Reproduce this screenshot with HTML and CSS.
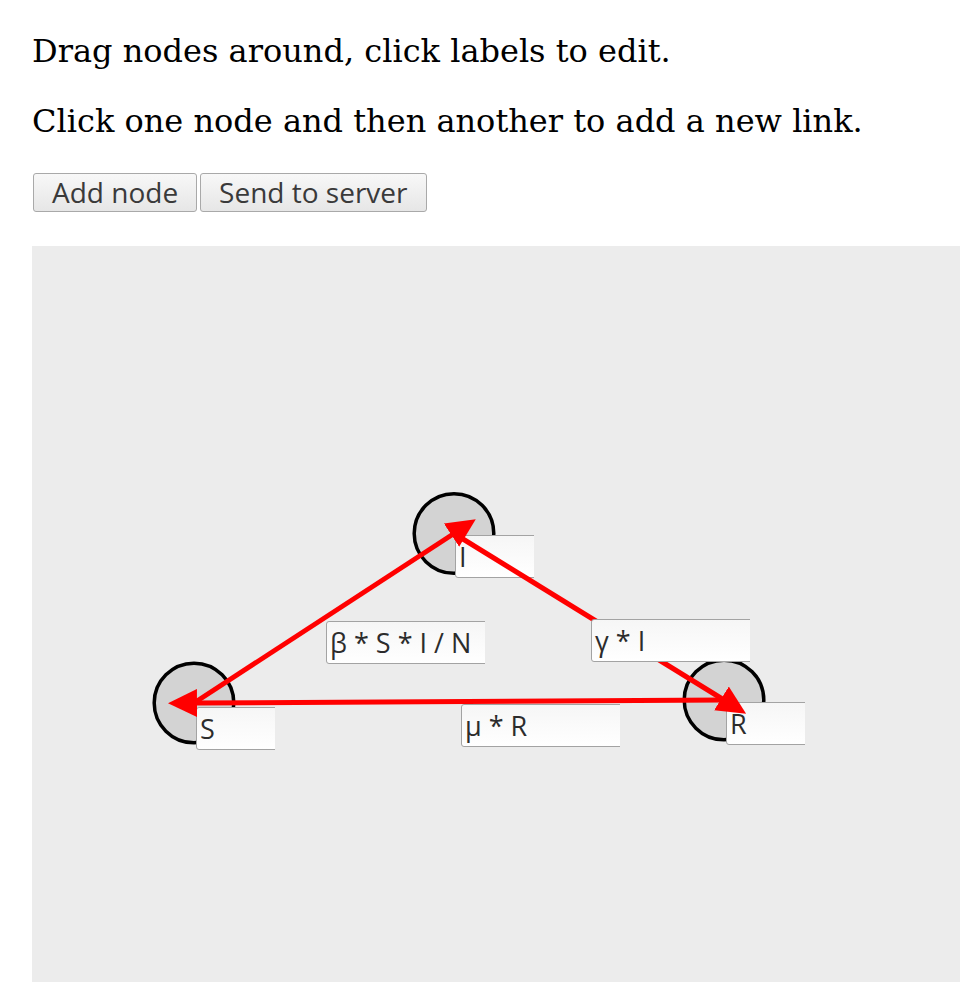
FILE: index.html
```html
<!DOCTYPE html>
<html>
<head>
<meta charset="utf-8">
<title>Graph editor</title>
<link rel="stylesheet" href="styles.css">
</head>
<body>
<p class="intro">Drag nodes around, click labels to edit.</p>
<p class="intro">Click one node and then another to add a new link.</p>
<div class="toolbar">
  <button class="btn" type="button">Add node</button>
  <button class="btn" type="button">Send to server</button>
</div>
<div class="canvas">
  <svg class="graph" width="928" height="736" viewBox="0 0 928 736">
    <defs>
      <marker id="arrow" markerUnits="userSpaceOnUse" viewBox="0 0 29 28" markerWidth="29" markerHeight="28" refX="3" refY="14" orient="auto">
        <path d="M0,0 L29,14 L0,28 Z" fill="#ff0000"/>
      </marker>
    </defs>

    <g class="node">
      <circle cx="162" cy="457" r="39.8"/>
      <foreignObject x="164" y="461" width="79" height="43">
        <div class="lbl"><span class="box" contenteditable="true">S</span></div>
      </foreignObject>
    </g>
    <g class="node">
      <circle cx="422" cy="287.5" r="39.8"/>
      <foreignObject x="423" y="289" width="79" height="43">
        <div class="lbl"><span class="box" contenteditable="true">I</span></div>
      </foreignObject>
    </g>
    <g class="node">
      <circle cx="692" cy="454" r="39.8"/>
      <foreignObject x="694" y="456" width="79" height="43">
        <div class="lbl"><span class="box" contenteditable="true">R</span></div>
      </foreignObject>
    </g>

    <g class="link">
      <line x1="162" y1="457" x2="422" y2="287.5" marker-end="url(#arrow)"/>
      <foreignObject x="294" y="374.5" width="159" height="43">
        <div class="lbl"><span class="box" contenteditable="true">β * S * I / N</span></div>
      </foreignObject>
    </g>
    <g class="link">
      <line x1="422" y1="287.5" x2="692" y2="454" marker-end="url(#arrow)"/>
      <foreignObject x="559" y="373" width="159" height="43">
        <div class="lbl"><span class="box" contenteditable="true">γ * I</span></div>
      </foreignObject>
    </g>
    <g class="link">
      <line x1="692" y1="454" x2="162" y2="457" marker-end="url(#arrow)"/>
      <foreignObject x="429" y="458" width="159" height="43">
        <div class="lbl"><span class="box" contenteditable="true">μ * R</span></div>
      </foreignObject>
    </g>
  </svg>
</div>
</body>
</html>
```
FILE: styles.css
```css
html {
  overflow: hidden;
}

body {
  margin: 0;
  padding: 0 0 0 32px;
  font-family: "DejaVu Serif", serif;
  font-size: 32px;
  color: #000;
  background: #fff;
}

.intro {
  margin: 32px 0 30px 0;
}

.toolbar {
  display: flex;
  gap: 3px;
  margin: 30px 0 32px 0;
  padding: 3px 0 2px 1px;
}

.btn {
  box-sizing: border-box;
  height: 39px;
  margin: 0;
  padding: 0 18px;
  border: 1px solid #a9a9a9;
  border-radius: 3px;
  background: linear-gradient(#f8f8f8, #e6e6e6);
  color: #3a3a3a;
  font-family: "Open Sans", "Noto Sans", sans-serif;
  font-size: 28px;
  line-height: 37px;
}

.canvas {
  height: 736px;
  background: #ececec;
  overflow: hidden;
}

.graph {
  display: block;
}

.node circle {
  fill: #d3d3d3;
  stroke: #000;
  stroke-width: 3.5;
}

.link line {
  stroke: #ff0000;
  stroke-width: 5;
}

.lbl {
  width: 100%;
  height: 43px;
  overflow: hidden;
}

.box {
  display: block;
  box-sizing: border-box;
  width: 240px;
  height: 43px;
  padding: 0 3px;
  border: 1px solid #a3a3a3;
  border-radius: 3px;
  background: linear-gradient(#f6f6f6, #ffffff);
  color: #2c2c2c;
  font-family: "Open Sans", "Noto Sans", sans-serif;
  font-size: 27px;
  line-height: 41px;
  white-space: nowrap;
  outline: none;
}
```
